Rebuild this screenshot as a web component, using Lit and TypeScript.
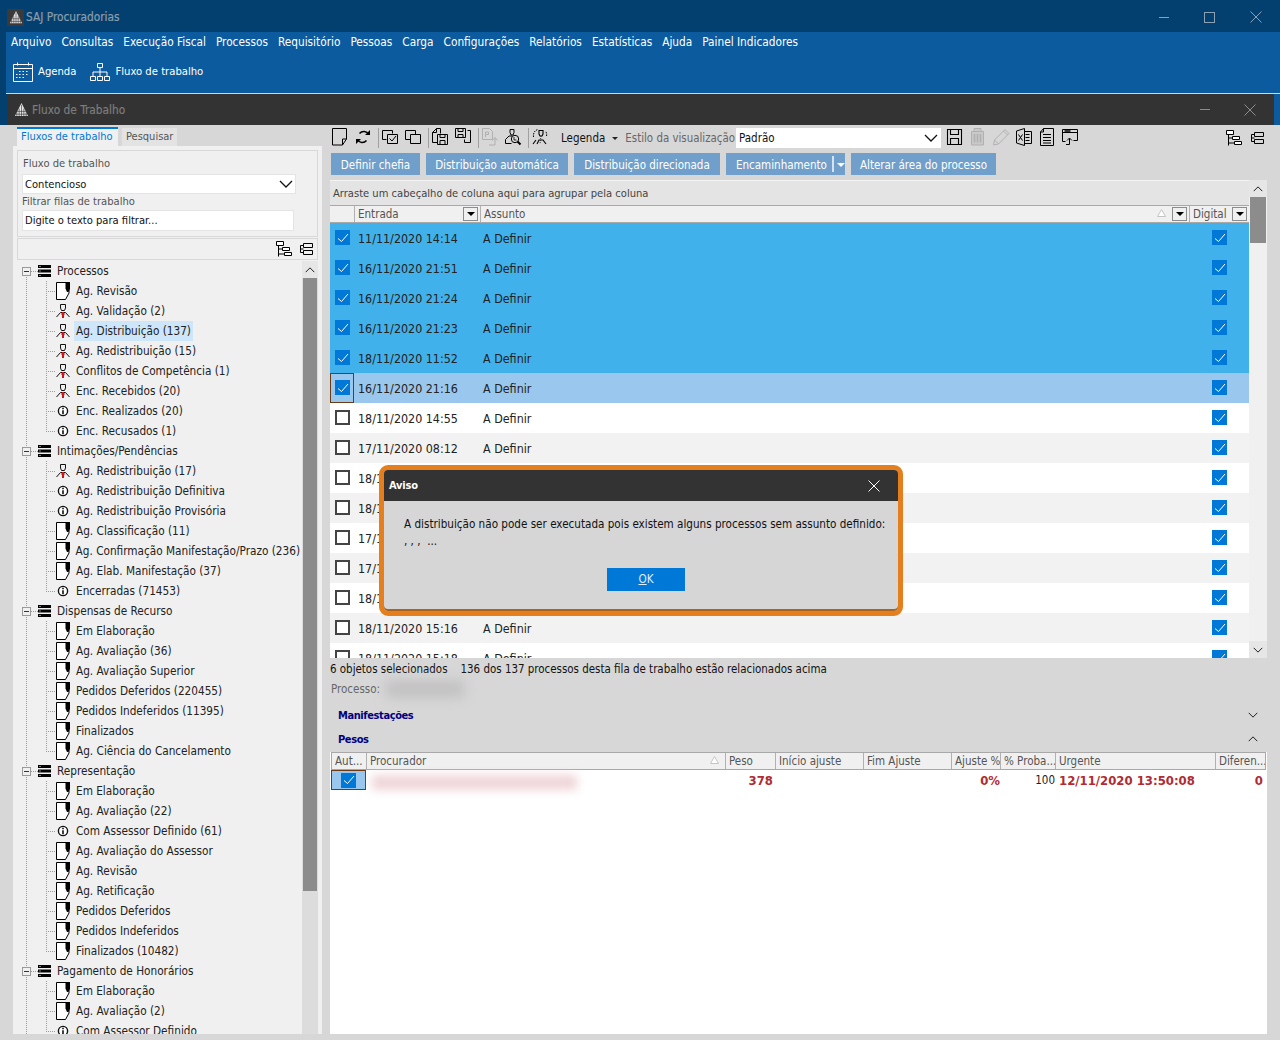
import { LitElement, css, html, nothing, svg } from "lit";
import { customElement } from "lit/decorators.js";

// Icons ---------------------------------------------------------------

const chevron = (up = false, w = 14, color = "#111") => html`<svg width=${w} height="8" viewBox="0 0 14 8" fill="none" stroke=${color} stroke-width="1.3">
  <path d=${up ? "M1 7l6-6 6 6" : "M1 1l6 6 6-6"} />
</svg>`;

const closeX = (size: number, color: string) => html`<svg width=${size} height=${size} viewBox="0 0 12 12" stroke=${color} stroke-width="1"><path d="M.5 .5l11 11M11.5 .5l-11 11" /></svg>`;

const logo = (size: number) => html`<svg width=${size} height=${size} viewBox="0 0 16 16">
  <path d="M8 1L15 15H1z" fill="#e8e8e8" />
  <path d="M8 3v12M5.5 7v8M10.5 7v8M3 11v4M13 11v4M3 10h10M2 13h12" stroke="#3a3a3a" stroke-width=".7" />
</svg>`;

const docIcon = html`<svg width="14" height="18" viewBox="0 0 14 18">
  <path d="M.5 .5H13V11L9.5 17.5H.5Z" fill="#fff" stroke="#000" />
  <path d="M9.5 0H14V6.5L12.5 10H11L9.5 6.5Z" fill="#000" />
</svg>`;

const personIcon = html`<svg width="14" height="14" viewBox="0 0 14 14" fill="none" stroke="#111">
  <path d="M4.5 .5h5v3.5l-1 2.5h-3l-1-2.5z" />
  <path d="M0.5 13l4-4.5h5l4 4.5" />
  <path d="M7 8v6" stroke="#d0101c" stroke-width="2" />
  <path d="M5 10h4" stroke="#d0101c" />
</svg>`;

const infoIcon = html`<svg width="14" height="14" viewBox="0 0 14 14">
  <circle cx="7" cy="7" r="4.6" fill="#fff" stroke="#111" stroke-width="1.4" />
  <path d="M7 3.8v1.4M7 6.2v4" stroke="#111" stroke-width="1.6" />
</svg>`;

const stackIcon = html`<svg width="13" height="12" viewBox="0 0 13 12">
  <path d="M0 0h13v3H0zM0 4.5h13v3H0zM0 9h13v3H0z" fill="#000" />
  <path d="M1.5 1.5h1M1.5 6h1M1.5 10.5h1" stroke="#fff" />
</svg>`;

const gridTree = html`<svg width="16" height="16" viewBox="0 0 16 16" fill="#fff" stroke="#000">
  <path d="M.5 .5h7v4h-7zM6.5 6.5h7v3h-7zM8.5 11.5h7v3h-7z" />
  <path d="M2.5 4.5v11M2.5 8h4M2.5 13h6" fill="none" />
</svg>`;

const gridFlat = html`<svg width="13" height="12" viewBox="0 0 13 12" fill="none" stroke="#000">
  <path d="M3.5 .5h9v4h-9zM.5 2.5h3M.5 2.5v7M.5 9.5h3M3.5 7.5h9v4h-9zM.5 6h3" />
</svg>`;

const sortMark = html`<svg width="9" height="8" viewBox="0 0 9 8"><path d="M4.5 .5L8.5 7.5H.5z" fill="#fff" stroke="#c4c4c4" /></svg>`;

const tool = (paths: unknown, off = false) => html`<svg class="tool" width="16" height="18" viewBox="0 0 16 18" fill="none" stroke=${off ? "#b0b0b0" : "#000"}>${paths}</svg>`;

const tools = {
  page: svg`<path d="M.5 .5h14V11l-4 6H.5zM10.500 17v-6h4" />`,
  refresh: svg`<path d="M13.5 6.5C12 3 7 2.5 4.5 5.5M2.5 11.5C4 15 9 15.5 11.5 12.5" stroke-width="1.4" /><path d="M10 7h5V2zM6 11H1v5z" fill="#000" stroke="none" />`,
  copyCheck: svg`<path d="M.5 2.5h10v3M.5 2.5v9h4M5.5 6.5h10v9h-10z" /><path d="M7.5 10.5l2.5 2.5 4-5" />`,
  copy: svg`<path d="M.5 2.5h10v4M.5 2.5v9h5M5.5 6.5h10v9h-10z" />`,
  docSave: svg`<path d="M8.5 .5h-4l-4 4v10h5M4.5 .5v4h-4M8.5 .5v5" /><path d="M5.5 6.5h10v10h-10zM8 6.5v3h5v-3M8 16.5v-4h5v4" />`,
  saveDoc: svg`<path d="M.5 .5h10v9h-10zM3 .5v3h5v-3M3 9.5v-3h5v3M12.5 2.5h3v12h-6v-3" />`,
  docUp: svg`<path d="M.5 .5h7l3 3v8h-10zM3.5 4v5M3.5 4h3v2.5h-3M13 17v-7M10.5 12.5l2.5-3 2.5 3M7 17h6" />`,
  search: svg`<path d="M5 1.5h4v3l-1 2.5h-2l-1-2.5zM.5 15.5v-4l3.5-3.5h3M6.5 15.5h-6" /><circle cx="10" cy="11" r="3.7" /><path d="M12.5 13.5l3 3" stroke-width="2" /><path d="M9 9v3h2.5" stroke-width=".8" />`,
  swap: svg`<path d="M7 2.5h4v3.5l-1 2h-2l-1-2zM1 16l3-4M5 16l2-4h4l3 4" stroke-width="1.1" /><path d="M1.5 9C1 5 3 2 6 1.5M14.5 8c.5-2 0-3.5-1-5" stroke-dasharray="1.5 1" /><path d="M9 8l-1 8" stroke="#333" stroke-dasharray="1 1" />`,
  floppy: svg`<path d="M.5 1.5h14v15H.5zM3.5 1.5v5h8v-5M3.5 16.5v-6h8v6" stroke-width="1.1" />`,
  trash: svg`<path d="M1.5 3.5h12v13.5h-12zM4 .5h7v3H4z" fill="#c9c9c9" /><path d="M4.5 6v8.5M7.5 6v8.5M10.5 6v8.5" stroke-width="1.5" />`,
  pencil: svg`<path d="M.5 17l1-5L12 1.5l4 4L5.5 16zM1.5 12l4 4M10.5 3l4 4" />`,
  excel: svg`<path d="M8 3.5h7.5v12H8M9.5 6.5h4M9.5 9.5h4M9.5 12.5h4" /><path d="M.5 3l8-2.5v17l-8-2.5zM2.5 6.5l4 6M6.5 6.5l-4 6" />`,
  lines: svg`<path d="M4.5 .5h10v17h-13V4zM4.5 .5V4h-3M4 6.5h8M4 9.5h8M4 12.5h8M4 15h8" />`,
  upload: svg`<path d="M.5 1.5h15v11h-4M.5 1.5v12h3M.5 4.5h15M7.5 16.5v-6M5 12.5l2.5-2.5 2.5 2.5M4 16.5h3.5" /><path d="M2.5 3h6" stroke-width="1.5" />`,
};

const check = (on: boolean) =>
  html`<span class="chk ${on ? "on" : ""}">${on
    ? html`<svg width="12" height="10" viewBox="0 0 12 10" fill="none" stroke="#fff"><path d="M1 5.5l3.5 3L11 1" /></svg>`
    : nothing}</span>`;

const dropBtn = html`<span class="drop"></span>`;

// Data ---------------------------------------------------------------

type Kind = "d" | "p" | "i";
const tree: [string, [Kind, string, boolean?][]][] = [
  ["Processos", [
    ["d", "Ag. Revisão"], ["p", "Ag. Validação (2)"], ["p", "Ag. Distribuição (137)", true],
    ["p", "Ag. Redistribuição (15)"], ["p", "Conflitos de Competência (1)"], ["p", "Enc. Recebidos (20)"],
    ["i", "Enc. Realizados (20)"], ["i", "Enc. Recusados (1)"],
  ]],
  ["Intimações/Pendências", [
    ["p", "Ag. Redistribuição (17)"], ["i", "Ag. Redistribuição Definitiva"], ["i", "Ag. Redistribuição Provisória"],
    ["d", "Ag. Classificação (11)"], ["d", "Ag. Confirmação Manifestação/Prazo (236)"], ["d", "Ag. Elab. Manifestação (37)"],
    ["i", "Encerradas (71453)"],
  ]],
  ["Dispensas de Recurso", [
    ["d", "Em Elaboração"], ["d", "Ag. Avaliação (36)"], ["d", "Ag. Avaliação Superior"], ["d", "Pedidos Deferidos (220455)"],
    ["d", "Pedidos Indeferidos (11395)"], ["d", "Finalizados"], ["d", "Ag. Ciência do Cancelamento"],
  ]],
  ["Representação", [
    ["d", "Em Elaboração"], ["d", "Ag. Avaliação (22)"], ["i", "Com Assessor Definido (61)"], ["d", "Ag. Avaliação do Assessor"],
    ["d", "Ag. Revisão"], ["d", "Ag. Retificação"], ["d", "Pedidos Deferidos"], ["d", "Pedidos Indeferidos"], ["d", "Finalizados (10482)"],
  ]],
  ["Pagamento de Honorários", [["d", "Em Elaboração"], ["d", "Ag. Avaliação (2)"], ["i", "Com Assessor Definido"]]],
];

const kindIcon = { d: docIcon, p: personIcon, i: infoIcon };

const rows = [
  "11/11/2020 14:14", "16/11/2020 21:51", "16/11/2020 21:24", "16/11/2020 21:23", "18/11/2020 11:52",
  "16/11/2020 21:16", "18/11/2020 14:55", "17/11/2020 08:12", "18/11/2020 14:57", "18/11/2020 15:02",
  "17/11/2020 08:20", "17/11/2020 08:31", "18/11/2020 15:11", "18/11/2020 15:16", "18/11/2020 15:18",
];

const pesoCols: [string, number][] = [
  ["Aut...", 35], ["Procurador", 359], ["Peso", 50], ["Início ajuste", 88], ["Fim Ajuste", 88],
  ["Ajuste %", 49], ["% Proba...", 55], ["Urgente", 160], ["Diferen...", 49],
];

@customElement("app-root")
export class AppRoot extends LitElement {
  render() {
    return html`<div class="app">
      <header class="title-bar">
        <span class="logo-box">${logo(14)}</span>
        <span class="app-name">SAJ Procuradorias</span>
        <span class="win-btns">
          <span class="w-min"></span><span class="w-max"></span>${closeX(12, "#8ba2b5")}
        </span>
      </header>
      <div class="blue-wrap">
        <div class="blue">
          <nav class="menu">
            ${["Arquivo", "Consultas", "Execução Fiscal", "Processos", "Requisitório", "Pessoas", "Carga", "Configurações", "Relatórios", "Estatísticas", "Ajuda", "Painel Indicadores"].map((m) => html`<span>${m}</span>`)}
          </nav>
          <div class="ribbon">
            <span class="rib-item">
              <svg width="20" height="20" viewBox="0 0 20 20" fill="none" stroke="#fff">
                <path d="M.5 2.5h19v17H.5zM.5 6.5h19M4.5 .5v3M15.5 .5v3" />
                <path d="M6 9.5h1.5M9.5 9.5H11M13 9.5h1.5M3 12.5h1.5M6 12.5h1.5M9.5 12.5H11M13 12.5h1.5M3 15.5h1.5M6 15.5h1.5M9.5 15.5H11" stroke-width="1.2" />
              </svg>
              Agenda
            </span>
            <span class="rib-item">
              <svg width="20" height="18" viewBox="0 0 20 18" fill="none" stroke="#fff">
                <path d="M7.5 .5h5v4h-5zM.5 13.5h5v4h-5zM7.5 13.5h5v4h-5zM14.5 13.5h5v4h-5zM10 4.5v9M3 13.5V9h14v4.5" />
              </svg>
              Fluxo de trabalho
            </span>
          </div>
        </div>
      </div>
      <div class="sub-wrap">
        <div class="sub-title">
          <span class="sub-logo">${logo(15)}</span>
          <span class="sub-name">Fluxo de Trabalho</span>
          <span class="sub-btns"><span class="s-min"></span>${closeX(12, "#8c8c8c")}</span>
        </div>
      </div>
      <main class="main">
        <section class="left">
          <div class="tabs">
            <span class="tab active">Fluxos de trabalho</span>
            <span class="tab">Pesquisar</span>
          </div>
          <div class="left-panel">
            <div class="filters">
              <div class="lbl first">Fluxo de trabalho</div>
              <div class="combo">Contencioso ${chevron()}</div>
              <div class="lbl">Filtrar filas de trabalho</div>
              <div class="input">Digite o texto para filtrar...</div>
            </div>
            <div class="tree-tools">${gridTree}${gridFlat}</div>
            <div class="tree-wrap">
              <div class="tree">${tree.map(([name, kids]) => html`
                <div class="node root">
                  <span class="expander"></span>
                  <span class="stack">${stackIcon}</span>
                  <span class="root-name">${name}</span>
                </div>
                ${kids.map(([k, label, sel], i) => html`<div class="node child ${i === kids.length - 1 ? "last" : ""}">
                  <span class="kid-icon">${kindIcon[k]}</span>
                  <span class="kid-name ${sel ? "sel" : ""}">${label}</span>
                </div>`)}`)}
              </div>
              <div class="vbar">
                <span class="arrow">${chevron(true, 10)}</span>
                <span class="thumb tree-thumb"></span>
              </div>
            </div>
          </div>
        </section>
        <section class="right">
          <div class="toolbar">
            ${tool(tools.page)}${tool(tools.refresh)}<span class="sep"></span>
            ${tool(tools.copyCheck)}${tool(tools.copy)}<span class="sep"></span>
            ${tool(tools.docSave)}${tool(tools.saveDoc)}<span class="sep"></span>
            ${tool(tools.docUp, true)}${tool(tools.search)}<span class="sep"></span>
            ${tool(tools.swap)}
            <span class="legend">Legenda <i class="caret"></i></span>
            <span class="style-lbl">Estilo da visualização</span>
            <span class="style-combo">Padrão ${chevron()}</span>
            <span class="right-tools">
              ${tool(tools.floppy)}${tool(tools.trash, true)}${tool(tools.pencil, true)}${tool(tools.excel)}${tool(tools.lines)}${tool(tools.upload)}
            </span>
            <span class="end-tools">${gridTree}${gridFlat}</span>
          </div>
          <div class="actions">
            <span class="act w90">Definir chefia</span>
            <span class="act w142">Distribuição automática</span>
            <span class="act w146">Distribuição direcionada</span>
            <span class="act w119 split">Encaminhamento<i class="split-bar"></i><i class="caret white"></i></span>
            <span class="act w145">Alterar área do processo</span>
          </div>
          <div class="grid">
            <div class="grid-main">
              <div class="group-panel">Arraste um cabeçalho de coluna aqui para agrupar pela coluna</div>
              <div class="grid-head">
                <span class="hc h-chk"></span>
                <span class="hc h-date">Entrada ${dropBtn}</span>
                <span class="hc h-subj">Assunto <span class="sort">${sortMark}</span>${dropBtn}</span>
                <span class="hc h-dig">Digital ${dropBtn}</span>
              </div>
              <div class="grid-rows">
                ${rows.map((d, i) => html`<div class="grow ${i < 5 ? "selected" : i === 5 ? "current" : i % 2 ? "alt" : ""}">
                  <span class="c-chk">${check(i <= 5)}</span>
                  <span class="c-date">${d}</span>
                  <span class="c-subj">A Definir</span>
                  <span class="c-dig">${check(true)}</span>
                </div>`)}
              </div>
            </div>
            <div class="vbar grid-bar">
              <span class="arrow">${chevron(true, 10)}</span>
              <span class="thumb grid-thumb"></span>
              <span class="arrow bottom">${chevron(false, 10)}</span>
            </div>
          </div>
          <div class="status"><span>6 objetos selecionados</span><span>136 dos 137 processos desta fila de trabalho estão relacionados acima</span></div>
          <div class="processo">Processo: <span class="blur-num"></span></div>
          <div class="section s1"><b>Manifestações</b>${chevron(false, 10)}</div>
          <div class="section s2"><b>Pesos</b>${chevron(true, 10)}</div>
          <div class="pesos">
            <div class="pesos-head">
              ${pesoCols.map(([t, w], i) => html`<span class="ph" style="width:${w}px">${t}${i === 1 ? html`<span class="sort p-sort">${sortMark}</span>` : nothing}</span>`)}
            </div>
            <div class="pesos-row">
              <span class="p-auto">${check(true)}</span>
              <span class="p-name"><span class="blur-name"></span></span>
              <span class="p-peso red">378</span>
              <span class="p-ini"></span>
              <span class="p-fim"></span>
              <span class="p-aj red">0%</span>
              <span class="p-prob">100</span>
              <span class="p-urg red">12/11/2020 13:50:08</span>
              <span class="p-dif red">0</span>
            </div>
          </div>
        </section>
      </main>
      <div class="dialog">
        <div class="dlg-title"><b>Aviso</b>${closeX(12, "#fff")}</div>
        <div class="dlg-body">
          <div class="dlg-msg">A distribuição não pode ser executada pois existem alguns processos sem assunto definido:</div>
          <div class="dlg-msg second">, , , &nbsp;...</div>
          <div class="dlg-ok"><span class="ok"><u>O</u>K</span></div>
        </div>
      </div>
    </div>`;
  }

  static styles = css`
    :host {
      display: block;
      --dot-v: repeating-linear-gradient(to bottom, #9c9c9c 0 1px, transparent 1px 2px);
      --dot-h: repeating-linear-gradient(to right, #9c9c9c 0 1px, transparent 1px 2px);
      font-family: "DejaVu Sans Condensed", "DejaVu Sans", sans-serif;
      font-size: 11.5px;
      color: #1a1a1a;
    }
    .app {
      position: relative;
      width: 1280px;
      height: 1040px;
      overflow: hidden;
      display: flex;
      flex-direction: column;
      background: #d7d7d7;
    }
    .title-bar {
      height: 32px;
      display: flex;
      align-items: center;
      background: #04406f;
      padding: 2px 0 0 7px;
      box-sizing: border-box;
    }
    .logo-box {
      width: 17px;
      height: 17px;
      display: flex;
      align-items: center;
      justify-content: center;
      background: #3a3a3a;
      margin-right: 2px;
    }
    .app-name {
      color: #8a9dac;
      font-size: 11.8px;
      -webkit-text-stroke: 0.2px #8a9dac;
    }
    .win-btns {
      margin-left: auto;
      display: flex;
      align-items: center;
      gap: 35px;
      padding-right: 18px;
    }
    .w-min {
      width: 10px;
      height: 1px;
      background: #8ba2b5;
    }
    .w-max {
      width: 9px;
      height: 9px;
      border: 1px solid #8ba2b5;
    }
    .blue-wrap {
      background: #04406f;
      padding-left: 6px;
    }
    .blue {
      background: #0c5b9f;
      height: 61px;
      border-bottom: 1px solid #c8d8e6;
    }
    .menu {
      height: 20px;
      display: flex;
      align-items: center;
      gap: 10px;
      padding-left: 5px;
      color: #fff;
      font-size: 11.75px;
    }
    .ribbon {
      height: 39px;
      padding-bottom: 2px;
      display: flex;
      align-items: center;
      gap: 14px;
      padding-left: 7px;
      color: #fff;
      font-size: 11.2px;
    }
    .rib-item {
      display: flex;
      align-items: center;
      gap: 5px;
    }
    .sub-wrap {
      background: linear-gradient(to right, #04406f 7px, #0c5b9f 7px);
      padding: 0 6px 0 7px;
    }
    .sub-title {
      height: 31px;
      background: #333;
      display: flex;
      align-items: center;
    }
    .sub-logo {
      margin-left: 7px;
      display: flex;
    }
    .sub-name {
      color: #7c7c7c;
      font-size: 11.8px;
      -webkit-text-stroke: 0.2px #7c7c7c;
      margin-left: 3px;
    }
    .sub-btns {
      margin-left: auto;
      display: flex;
      align-items: center;
      gap: 34px;
      padding-right: 18px;
    }
    .s-min {
      width: 10px;
      height: 1px;
      background: #8c8c8c;
    }

    /* left pane */
    .main {
      flex: 1;
      min-height: 0;
      display: flex;
    }
    .left {
      width: 309px;
      margin-left: 13px;
      padding-top: 2px;
      height: 909px;
      box-sizing: border-box;
      display: flex;
      flex-direction: column;
    }
    .tabs {
      height: 19px;
      display: flex;
      align-items: flex-end;
      gap: 4px;
      padding-left: 4px;
      font-size: 11px;
    }
    .tab {
      height: 18px;
      line-height: 18px;
      padding: 0 4px;
      background: #e3e3e3;
      color: #555;
      white-space: nowrap;
    }
    .tab.active {
      height: 17px;
      line-height: 15px;
      width: 93px;
      border-top: 2px solid #0078d7;
      background: #f0f0f0;
      color: #0078d7;
    }
    .left-panel {
      flex: 1;
      min-height: 0;
      background: #f0f0f0;
      padding: 4px 4px 0;
      display: flex;
      flex-direction: column;
    }
    .filters {
      height: 85px;
      border: 1px solid #d8d8d8;
      padding-left: 4px;
      color: #555;
      font-size: 11.1px;
    }
    .lbl {
      height: 16px;
      line-height: 16px;
    }
    .lbl.first {
      margin: 5px 0 2px 1px;
    }
    .combo {
      width: 274px;
      height: 20px;
      box-sizing: border-box;
      border: 1px solid #e4e4e4;
      background: #fff;
      color: #111;
      display: flex;
      align-items: center;
      justify-content: space-between;
      padding: 0 2px;
    }
    .input {
      width: 272px;
      height: 21px;
      box-sizing: border-box;
      border: 1px solid #e4e4e4;
      background: #fff;
      color: #111;
      line-height: 19px;
      padding-left: 2px;
    }
    .tree-tools {
      margin-top: 1px;
      height: 22px;
      border: 1px solid #d8d8d8;
      box-sizing: border-box;
      display: flex;
      align-items: center;
      justify-content: flex-end;
      gap: 8px;
      padding-right: 4px;
    }
    .tree-wrap {
      flex: 1;
      min-height: 0;
      margin-top: 1px;
      display: flex;
      overflow: hidden;
    }
    .tree {
      width: 285px;
      flex: none;
      overflow: hidden;
      color: #222;
      font-size: 11.7px;
    }
    .node {
      height: 20px;
      display: flex;
      align-items: center;
      white-space: nowrap;
      background-image: var(--dot-v);
      background-repeat: no-repeat;
      background-size: 1px 100%;
      background-position: 9px 0;
    }
    .node.root {
      padding-left: 5px;
      background-image: var(--dot-v), var(--dot-h);
      background-size: 1px 100%, 8px 1px;
      background-position: 9px 0, 14px 10px;
    }
    .tree > .node.root:first-child {
      background-size: 1px 50%, 8px 1px;
      background-position: 9px 10px, 14px 10px;
    }
    .expander {
      width: 9px;
      height: 9px;
      box-sizing: border-box;
      border: 1px solid #9a9a9a;
      background: linear-gradient(#333, #333) center / 5px 1px no-repeat, #f0f0f0;
      margin-right: 7px;
    }
    .stack {
      display: flex;
      width: 13px;
      margin-right: 6px;
    }
    .node.child {
      padding-left: 39px;
      background-image: var(--dot-v), var(--dot-v), var(--dot-h);
      background-size: 1px 100%, 1px 100%, 9px 1px;
      background-position: 9px 0, 29px 0, 29px 10px;
    }
    .node.child.last {
      background-size: 1px 100%, 1px 50%, 9px 1px;
    }
    .kid-icon {
      width: 18px;
      display: flex;
      align-items: center;
    }
    .kid-name {
      height: 20px;
      line-height: 20px;
      padding: 0 2px;
    }
    .kid-name.sel {
      background: #cde6f9;
    }
    .vbar {
      width: 16px;
      flex: none;
      background: #dcdcdc;
      display: flex;
      flex-direction: column;
    }
    .arrow {
      height: 17px;
      flex: none;
      display: flex;
      align-items: center;
      justify-content: center;
      background: #e6e6e6;
    }
    .thumb {
      flex: none;
      background: #8c8c8c;
    }
    .tree-thumb {
      height: 613px;
      margin: 0 1px;
    }

    /* right pane */
    .right {
      width: 937px;
      margin-left: 8px;
      padding-top: 2px;
      height: 909px;
      box-sizing: border-box;
      display: flex;
      flex-direction: column;
    }
    .toolbar {
      height: 22px;
      display: flex;
      align-items: center;
      gap: 7px;
      padding-left: 2px;
    }
    .tool {
      flex: none;
      overflow: visible;
      margin-top: -2px;
    }
    .sep {
      width: 1px;
      height: 20px;
      background: #a0a0a0;
      margin-right: -4px;
      flex: none;
    }
    .legend {
      display: flex;
      align-items: center;
      gap: 7px;
      margin-left: 6px;
      color: #111;
    }
    .caret {
      display: inline-block;
      width: 0;
      height: 0;
      border: 3px solid transparent;
      border-top: 3px solid #222;
      border-bottom: 0;
    }
    .caret.white {
      border-top-color: #fff;
      border-left-width: 4px;
      border-right-width: 4px;
      border-top-width: 4px;
    }
    .style-lbl {
      color: #666;
      margin-left: 0;
      margin-right: -6px;
      font-size: 11.4px;
      white-space: nowrap;
    }
    .style-combo {
      width: 205px;
      height: 20px;
      box-sizing: border-box;
      padding: 0 3px;
      background: #fff;
      color: #111;
      display: flex;
      align-items: center;
      justify-content: space-between;
      flex: none;
    }
    .right-tools {
      display: flex;
      gap: 7px;
      margin-left: -1px;
    }
    .end-tools {
      margin-left: auto;
      display: flex;
      align-items: center;
      gap: 9px;
      padding-right: 3px;
    }
    .actions {
      margin-top: 4px;
      height: 22px;
      display: flex;
      gap: 6px;
      padding-left: 1px;
    }
    .act {
      height: 22px;
      box-sizing: border-box;
      padding-top: 2px;
      display: flex;
      align-items: center;
      justify-content: center;
      background: #709fcb;
      color: #fff;
      font-weight: 500;
    }
    .w90 { width: 89px; }
    .w142 { width: 142px; }
    .w146 { width: 146px; }
    .w119 { width: 119px; }
    .w145 { width: 145px; }
    .split {
      justify-content: flex-start;
      padding-left: 10px;
    }
    .split-bar {
      width: 2px;
      height: 16px;
      background: #d6e2ee;
      margin: -2px 3px 0 5px;
    }
    .grid {
      margin-top: 5px;
      height: 478px;
      display: flex;
      background: #fff;
      overflow: hidden;
      flex: none;
    }
    .grid-main {
      width: 919px;
      flex: none;
      display: flex;
      flex-direction: column;
    }
    .group-panel {
      height: 25px;
      flex: none;
      box-sizing: border-box;
      border-top: 1px solid #f4f4f4;
      background: #e4e4e4;
      color: #444;
      line-height: 25px;
      padding-left: 3px;
      font-size: 11.1px;
    }
    .grid-head {
      height: 18px;
      flex: none;
      box-sizing: border-box;
      border-top: 1px solid #a8a8a8;
      border-bottom: 1px solid #a8a8a8;
      background: #f0f0f0;
      color: #555;
      display: flex;
      align-items: center;
    }
    .hc {
      height: 16px;
      display: flex;
      align-items: center;
      box-sizing: border-box;
      position: relative;
      white-space: nowrap;
    }
    .hc + .hc {
      border-left: 1px solid #b0b0b0;
      padding-left: 3px;
    }
    .h-chk { width: 24px; }
    .h-date { width: 126px; }
    .h-subj { width: 709px; }
    .h-dig { width: 60px; }
    .drop {
      margin-left: auto;
      margin-right: 2px;
      width: 15px;
      height: 14px;
      box-sizing: border-box;
      border: 1px solid #8c8c8c;
      background: linear-gradient(#f0f0f0, #f0f0f0);
      display: flex;
      align-items: center;
      justify-content: center;
    }
    .drop::after {
      content: "";
      border: 4px solid transparent;
      border-top: 4px solid #000;
      border-bottom: 0;
    }
    .sort {
      position: absolute;
      right: 23px;
      top: 3px;
      display: flex;
    }
    .grid-rows {
      flex: 1;
      min-height: 0;
      overflow: hidden;
    }
    .grow {
      height: 30px;
      display: flex;
      align-items: center;
      font-size: 12.4px;
      color: #222;
      background: #fff;
      box-sizing: border-box;
    }
    .grow.alt { background: #f2f2f2; }
    .grow.selected { background: #41b1ec; }
    .grow.current { background: #9ac7ee; }
    .c-chk {
      width: 28px;
      height: 30px;
      flex: none;
      box-sizing: border-box;
      padding: 0 0 1px 5px;
      display: flex;
      align-items: center;
    }
    .grow.current .c-chk {
      width: 24px;
      margin-right: 4px;
      border: 1px solid #6b3a17;
      padding-left: 4px;
    }
    .c-date { width: 125px; flex: none; }
    .c-subj { flex: 1; }
    .c-dig { width: 37px; flex: none; display: flex; padding-bottom: 1px; }
    .chk {
      width: 15px;
      height: 15px;
      box-sizing: border-box;
      border: 2px solid #444;
      background: #fff;
      display: flex;
      align-items: center;
      justify-content: center;
      flex: none;
    }
    .chk.on {
      border: 0;
      background: #0078d7;
    }
    .grid-bar {
      width: 18px;
      background: #f0f0f0;
    }
    .grid-thumb {
      height: 46px;
      margin: 0 1px;
    }
    .arrow.bottom { margin-top: auto; }
    .status {
      height: 21px;
      flex: none;
      display: flex;
      align-items: center;
      gap: 13px;
      color: #111;
      font-size: 11.45px;
    }
    .processo {
      height: 20px;
      flex: none;
      display: flex;
      align-items: center;
      gap: 6px;
      padding-left: 1px;
      color: #666;
    }
    .blur-num {
      width: 78px;
      height: 18px;
      background: #c2c2c2;
      filter: blur(6px);
    }
    .section {
      height: 20px;
      flex: none;
      display: flex;
      align-items: center;
      justify-content: space-between;
      padding: 0 9px 0 8px;
      color: #00007f;
      font-size: 11px;
    }
    .section b { letter-spacing: -0.4px; }
    .s1 { margin-top: 6px; }
    .s2 { margin-top: 4px; }
    .pesos {
      margin-top: 3px;
      flex: 1;
      min-height: 0;
      background: #fff;
    }
    .pesos-head {
      height: 18px;
      box-sizing: border-box;
      margin-left: 1px;
      border: 1px solid #a8a8a8;
      width: 935px;
      background: #f0f0f0;
      display: flex;
      align-items: center;
      color: #555;
    }
    .ph {
      height: 16px;
      line-height: 16px;
      box-sizing: border-box;
      padding-left: 3px;
      border-right: 1px solid #b0b0b0;
      position: relative;
      white-space: nowrap;
      overflow: hidden;
      flex: none;
    }
    .ph:last-child { border-right: 0; }
    .p-sort { right: 6px; top: 3px; }
    .pesos-row {
      height: 20px;
      display: flex;
      align-items: center;
      margin-left: 1px;
      font-size: 13px;
    }
    .p-auto {
      width: 35px;
      height: 20px;
      box-sizing: border-box;
      border: 1px solid #6b3a17;
      background: #9ac7ee;
      display: flex;
      align-items: center;
      padding-left: 9px;
      flex: none;
    }
    .p-name {
      width: 359px;
      flex: none;
      padding: 4px 0 0 6px;
      box-sizing: border-box;
    }
    .blur-name {
      display: block;
      width: 205px;
      height: 15px;
      background: #efd5d9;
      filter: blur(5px);
    }
    .red {
      color: #b22a33;
      font-weight: 700;
    }
    .p-peso { width: 48px; text-align: right; }
    .p-ini { width: 89px; }
    .p-fim { width: 88px; }
    .p-aj { width: 50px; text-align: right; }
    .p-prob { width: 55px; text-align: right; color: #222; font-size: 11.5px; font-weight: 400; }
    .p-urg { width: 161px; padding-left: 4px; box-sizing: border-box; white-space: nowrap; }
    .p-dif { width: 47px; text-align: right; }

    /* dialog */
    .dialog {
      position: absolute;
      left: 379px;
      top: 465px;
      width: 524px;
      height: 151px;
      box-sizing: border-box;
      border: 5px solid #e57f1e;
      border-radius: 9px;
      overflow: hidden;
      background: #d6d6d6;
      box-shadow: inset 0 -2px 0 #a9651f;
    }
    .dlg-title {
      height: 31px;
      background: #333;
      color: #fff;
      display: flex;
      align-items: center;
      justify-content: space-between;
      padding: 0 18px 0 5px;
      font-size: 11px;
    }
    .dlg-title b { letter-spacing: -0.2px; }
    .dlg-body {
      padding: 15px 0 0 20px;
      color: #111;
      font-size: 11.6px;
    }
    .dlg-msg {
      height: 17px;
      line-height: 17px;
      white-space: nowrap;
    }
    .dlg-ok {
      margin-top: 18px;
      padding-left: 203px;
    }
    .ok {
      display: block;
      width: 78px;
      height: 23px;
      line-height: 23px;
      text-align: center;
      background: #0078d7;
      color: #dfeefb;
    }
  `;
}

declare global {
  interface HTMLElementTagNameMap {
    "app-root": AppRoot;
  }
}
